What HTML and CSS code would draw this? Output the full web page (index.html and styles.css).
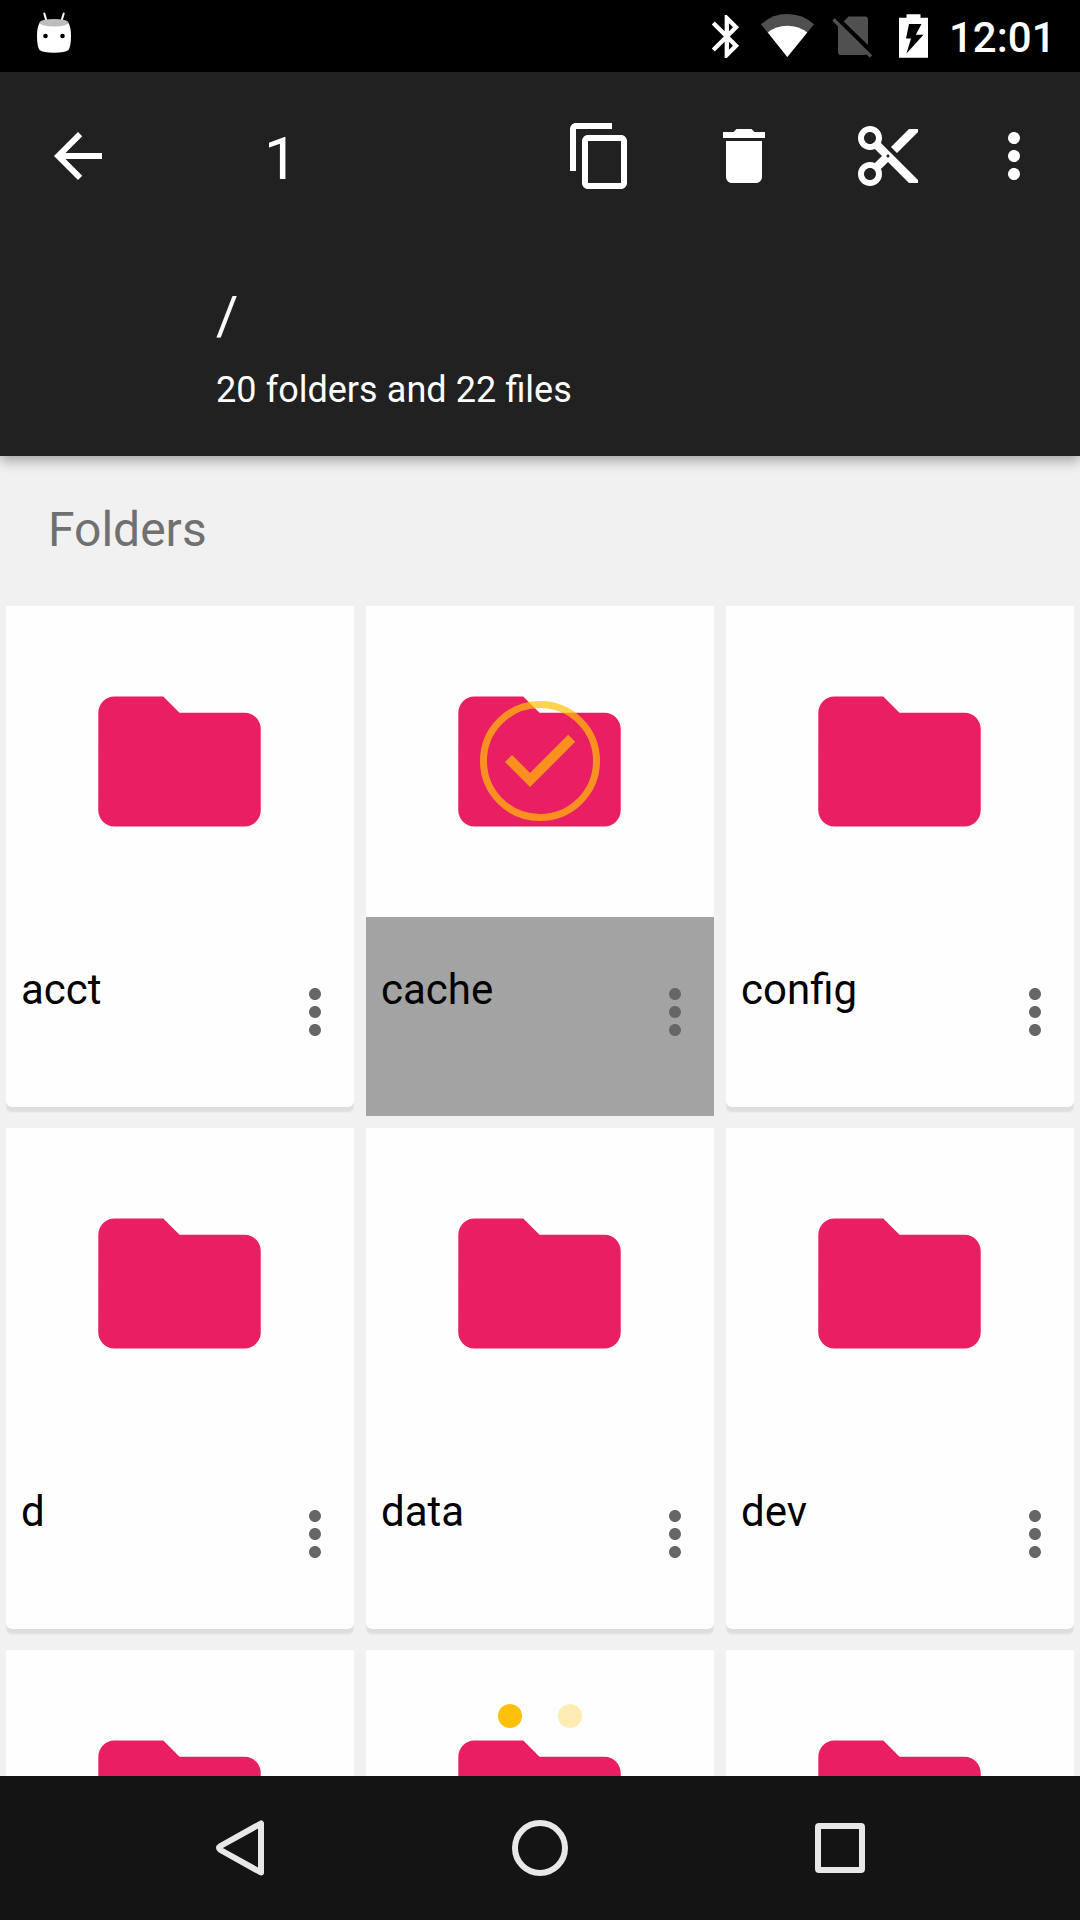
FILE: index.html
```html
<!DOCTYPE html>
<html lang="en">
<head>
<meta charset="utf-8">
<title>File manager</title>
<link rel="stylesheet" href="styles.css">
</head>
<body>
<svg class="defs" width="0" height="0" aria-hidden="true">
  <symbol id="folder" viewBox="0 0 24 24"><path d="M10 4H4c-1.1 0-1.99.9-1.99 2L2 18c0 1.1.9 2 2 2h16c1.1 0 2-.9 2-2V8c0-1.1-.9-2-2-2h-8l-2-2z"/></symbol>
  <symbol id="more" viewBox="0 0 24 24"><path d="M12 8c1.1 0 2-.9 2-2s-.9-2-2-2-2 .9-2 2 .9 2 2 2zm0 2c-1.1 0-2 .9-2 2s.9 2 2 2 2-.9 2-2-.9-2-2-2zm0 6c-1.1 0-2 .9-2 2s.9 2 2 2 2-.9 2-2-.9-2-2-2z"/></symbol>
</svg>
<div class="screen">
  <div class="status-bar">
    <svg class="robot" viewBox="36 0 36 72" width="36" height="72">
      <path d="M44.3 13.5L46.5 21M63.7 13.5L61.5 21" stroke="#fff" stroke-width="2" stroke-linecap="round"/>
      <path d="M39.5 23Q54 29 68.5 23Q71 27 71 36Q71 46 68.5 50Q65 52.8 54 52.8Q43 52.8 39.5 50Q37 46 37 36Q37 27 39.5 23Z" fill="#fff"/>
      <ellipse cx="54" cy="22.7" rx="14.5" ry="3.8" fill="#bdbdbd"/>
      <circle cx="45.5" cy="36" r="2.3"/><circle cx="62.5" cy="36" r="2.3"/>
    </svg>
    <div class="status-right">
      <svg viewBox="700 0 52 72" width="52" height="72"><path transform="translate(701 10.7) scale(2.15)" fill="#fff" d="M17.71 7.71L12 2h-1v7.59L6.41 5 5 6.41 10.59 12 5 17.59 6.41 19 11 14.41V22h1l5.71-5.71-4.3-4.29 4.3-4.29zM13 5.83l1.88 1.88L13 9.59V5.83zm1.88 10.46L13 18.17v-3.76l1.88 1.88z"/></svg>
      <svg viewBox="752 0 70 72" width="70" height="72"><path fill="#505050" d="M787.3 57L761 24.3Q772 14 787.3 14Q802.6 14 814 24.3Z"/><path fill="#fff" d="M787.3 57L767.8 32.5Q776 25.7 787.3 25.7Q799 25.7 807.2 32.5Z"/></svg>
      <svg viewBox="822 0 60 72" width="60" height="72"><path fill="#505050" d="M848.5 16.5H865Q868 16.5 868 19.5V45L843.7 21.5ZM838 25.5L867 53.5Q866 55 864 55H841Q838 55 838 52Z"/><path d="M833.5 19.5L871 56.5" stroke="#505050" stroke-width="3.4"/></svg>
      <svg viewBox="882 0 58 72" width="58" height="72"><path fill="#fff" d="M899 17.7H906.5V14.2H920.5V17.7H928V57.8H899Z"/><path d="M909 24H921.5L915.8 34.8H923.5L906.5 53.5L911 38.5H906Z"/></svg>
      <span class="clock">12:01</span>
    </div>
  </div>

  <header class="toolbar">
    <div class="actions">
      <svg class="back" viewBox="0 0 24 24"><path d="M20 11H7.83l5.59-5.59L12 4l-8 8 8 8 1.41-1.41L7.83 13H20v-2z"/></svg>
      <span class="count">1</span>
      <div class="buttons">
        <svg viewBox="0 0 24 24"><path d="M16 1H4c-1.1 0-2 .9-2 2v14h2V3h12V1zm3 4H8c-1.1 0-2 .9-2 2v14c0 1.1.9 2 2 2h11c1.1 0 2-.9 2-2V7c0-1.1-.9-2-2-2zm0 16H8V7h11v14z"/></svg>
        <svg viewBox="0 0 24 24"><path d="M6 19c0 1.1.9 2 2 2h8c1.1 0 2-.9 2-2V7H6v12zM19 4h-3.5l-1-1h-5l-1 1H5v2h14V4z"/></svg>
        <svg viewBox="0 0 24 24"><path d="M9.64 7.64c.23-.5.36-1.05.36-1.64 0-2.21-1.79-4-4-4S2 3.79 2 6s1.79 4 4 4c.59 0 1.14-.13 1.64-.36L10 12l-2.36 2.36C7.14 14.13 6.59 14 6 14c-2.21 0-4 1.79-4 4s1.79 4 4 4 4-1.79 4-4c0-.59-.13-1.14-.36-1.64L12 14l7 7h3v-1L9.64 7.64zM6 8c-1.1 0-2-.89-2-2s.9-2 2-2 2 .89 2 2-.9 2-2 2zm0 12c-1.1 0-2-.89-2-2s.9-2 2-2 2 .89 2 2-.9 2-2 2zm6-7.5c-.28 0-.5-.22-.5-.5s.22-.5.5-.5.5.22.5.5-.22.5-.5.5zM19 3l-6 6 2 2 7-7V3z"/></svg>
        <svg class="overflow"><use href="#more"/></svg>
      </div>
    </div>
    <div class="path">/</div>
    <div class="summary">20 folders and 22 files</div>
  </header>

  <main class="content">
    <h2 class="section-title">Folders</h2>
    <div class="grid">
      <div class="cell"><div class="card"><div class="thumb"><svg class="folder"><use href="#folder"/></svg></div><div class="info"><span class="name">acct</span><svg class="menu"><use href="#more"/></svg></div></div></div>
      <div class="cell selected"><div class="card"><div class="thumb"><svg class="folder"><use href="#folder"/></svg>
        <svg class="check" viewBox="0 0 120 120"><circle cx="60" cy="60" r="56.5"/><path d="M28.5 57.5L50 79L91.7 37.3"/></svg></div><div class="info"><span class="name">cache</span><svg class="menu"><use href="#more"/></svg></div></div></div>
      <div class="cell"><div class="card"><div class="thumb"><svg class="folder"><use href="#folder"/></svg></div><div class="info"><span class="name">config</span><svg class="menu"><use href="#more"/></svg></div></div></div>
      <div class="cell"><div class="card"><div class="thumb"><svg class="folder"><use href="#folder"/></svg></div><div class="info"><span class="name">d</span><svg class="menu"><use href="#more"/></svg></div></div></div>
      <div class="cell"><div class="card"><div class="thumb"><svg class="folder"><use href="#folder"/></svg></div><div class="info"><span class="name">data</span><svg class="menu"><use href="#more"/></svg></div></div></div>
      <div class="cell"><div class="card"><div class="thumb"><svg class="folder"><use href="#folder"/></svg></div><div class="info"><span class="name">dev</span><svg class="menu"><use href="#more"/></svg></div></div></div>
      <div class="cell"><div class="card"><div class="thumb"><svg class="folder"><use href="#folder"/></svg></div></div></div>
      <div class="cell"><div class="card"><div class="thumb"><svg class="folder"><use href="#folder"/></svg></div></div></div>
      <div class="cell"><div class="card"><div class="thumb"><svg class="folder"><use href="#folder"/></svg></div></div></div>
    </div>
    <div class="pager"><span class="dot active"></span><span class="dot"></span></div>
  </main>

  <nav class="nav-bar">
    <svg viewBox="0 0 72 72"><path d="M57 11.5V60.5L16.5 38Q13.5 36 16.5 34Z"/></svg>
    <svg viewBox="0 0 72 72"><circle cx="36" cy="36" r="25"/></svg>
    <svg viewBox="0 0 72 72"><rect x="14" y="14" width="44" height="44" rx="1"/></svg>
  </nav>
</div>
</body>
</html>
```
FILE: styles.css
```css
* { box-sizing: border-box; }
body { margin: 0; font-family: Roboto, "Noto Sans", sans-serif; }
svg { display: block; flex: none; }
.defs { position: absolute; }
.screen { width: 1080px; height: 1920px; display: flex; flex-direction: column; overflow: hidden; background: #f1f1f1; }

.status-bar { flex: none; height: 72px; background: #000; display: flex; justify-content: space-between; padding-left: 36px; }
.status-right { display: flex; width: 380px; }
.clock { padding: 14px 0 0 9px; font-size: 42px; line-height: 48px; font-weight: 500; color: #fff; }

.toolbar { flex: none; height: 384px; background: #212121; color: #fff; position: relative; z-index: 1; box-shadow: 0 5px 12px rgba(0, 0, 0, .32); }
.actions { height: 168px; display: flex; align-items: center; padding-left: 42px; }
.actions svg { width: 72px; height: 72px; fill: #fff; }
.count { width: 300px; margin-left: 150px; padding-top: 5px; font-size: 60px; line-height: 72px; }
.buttons { display: flex; gap: 72px; }
.buttons .overflow { margin-left: -18px; }
.path { padding: 44px 0 0 216px; font-size: 54px; line-height: 64px; }
.summary { padding: 21px 0 0 216px; font-size: 36px; line-height: 42px; word-spacing: .25px; }

.content { flex: 1; min-height: 0; overflow: hidden; position: relative; }
.section-title { margin: 0; height: 150px; padding: 46px 0 0 48px; font-size: 48px; line-height: 56px; font-weight: 400; color: #707070; }
.grid { display: grid; grid-template-columns: repeat(3, 348px); grid-auto-rows: 510px; gap: 12px; padding: 0 6px; }
.cell { overflow: hidden; }
.card { height: 501px; background: #fefefe; border-radius: 0 0 6px 6px; box-shadow: 0 5px 2px #dedede; }
.thumb { height: 311px; display: flex; align-items: center; justify-content: center; position: relative; }
.folder { width: 195px; height: 195px; margin-right: 1px; fill: #e91e63; }
.info { height: 199px; display: flex; justify-content: space-between; padding: 49px 3px 0 15px; }
.name { font-size: 42px; line-height: 48px; color: #000; }
.menu { width: 72px; height: 72px; margin-top: 10px; fill: #666; }
.selected .info { background: #a3a3a3; }
.check { position: absolute; left: 114px; top: 95px; width: 120px; height: 120px; fill: none; stroke: #ffc107; opacity: .7; }
.check circle { stroke-width: 7; }
.check path { stroke-width: 10; }
.pager { position: absolute; left: 0; right: 0; bottom: 48px; display: flex; justify-content: center; gap: 36px; }
.dot { width: 24px; height: 24px; border-radius: 50%; background: #ffecb3; }
.dot.active { background: #ffc107; }

.nav-bar { flex: none; height: 144px; background: #141414; display: flex; justify-content: center; align-items: center; gap: 228px; }
.nav-bar svg { width: 72px; height: 72px; fill: none; stroke: #e8e8e8; stroke-width: 6; stroke-linejoin: round; }
```
